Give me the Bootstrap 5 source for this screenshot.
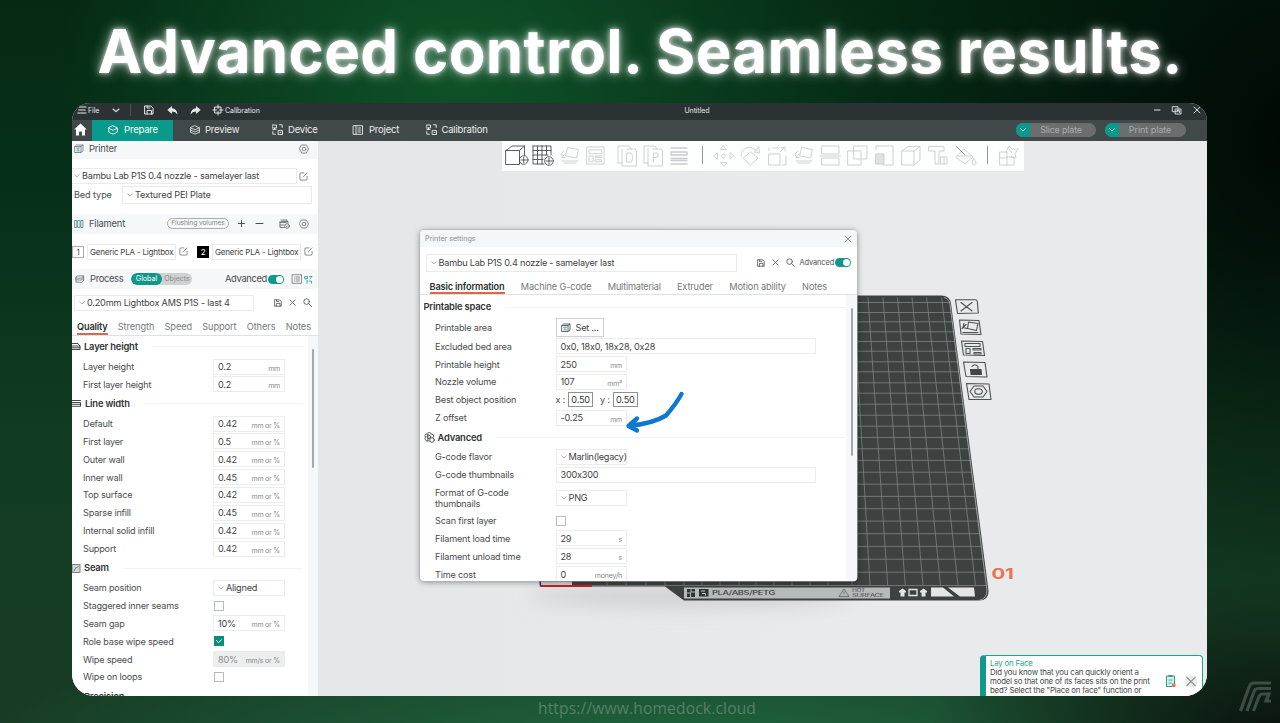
<!DOCTYPE html>
<html lang="en">
<head>
<meta charset="utf-8">
<title>Advanced control. Seamless results.</title>
<meta name="viewport" content="width=device-width, initial-scale=1">
<link rel="stylesheet" href="https://cdn.jsdelivr.net/npm/bootstrap@5.3.0/dist/css/bootstrap.min.css">
<style>
  html,body{height:723px;overflow:hidden}
  body{font-family:Inter,"Liberation Sans",sans-serif;font-size:9.15px;line-height:1;letter-spacing:-.2px;color:#4a4d4f;width:1280px;
    background:
      radial-gradient(360px 150px at 1290px 730px,#0a130d 0%,rgba(10,19,13,0) 100%),
      radial-gradient(700px 130px at 680px 745px,#20663f 0%,rgba(32,102,63,0) 100%),
      radial-gradient(400px 330px at 460px 70px,#0f5229 0%,rgba(15,82,41,0) 100%),
      radial-gradient(460px 500px at 1300px 140px,#010804 0%,rgba(1,8,4,0) 100%),
      linear-gradient(180deg,#052a13 0%,#06301a 28%,#113c21 60%,#173c25 100%)}
  svg{display:block;flex:none;overflow:visible}
  .ln{fill:none;stroke:currentColor;stroke-linecap:round;stroke-linejoin:round}
  .headline{height:103px;font-size:60px;font-weight:700;color:#fff;letter-spacing:.35px;padding-top:15px;white-space:nowrap;
    text-shadow:0 0 5px rgba(255,255,255,.8),0 0 14px rgba(255,255,255,.6)}
  .app{width:1135px;height:593px;margin-left:72px;border-radius:18px 18px 22px 22px;overflow:hidden;background:#e7e8ea}
  .titlebar{height:17px;background:#2b3234;color:#e6e8e8;font-size:7px;letter-spacing:-.08px;padding-bottom:3px}
  .tabbar{height:20.5px;background:#414849;color:#eceeee;font-size:9.5px;padding-bottom:1px!important}
  .tab-on{width:81px;background:#089a8b;color:#fff;box-shadow:0 1px #089a8b}
  .tb-item{height:100%}
  .pill{height:14px;border-radius:7px;overflow:hidden;background:#6a6e6f;color:#a9adad;font-size:9px}
  .pill i{width:14px;height:14px;background:#0a9a8b;color:#fff}
  .side{width:246px;background:#fff;height:555.5px;overflow:hidden}
  .sec{height:20px;background:linear-gradient(#f6f8fa,#f4f6f8);font-size:9.4px}
  .sec svg{color:#6d7173}
  .box{border:1px solid #e9eaeb;background:#fff;white-space:nowrap;color:#3f4244}
  .chev{color:#a8acae}
  .ptabs{font-size:9.2px;letter-spacing:-.05px;color:#75797b;border-bottom:1px solid #dfe2e4}
  .ptabs b{color:#2b2f31;font-weight:600;letter-spacing:-.15px}
  .ptabs span,.ptabs b{white-space:nowrap;height:100%;border-bottom:2px solid transparent}
  .ptabs b{border-color:#d8694b}
  .d .ptabs{letter-spacing:-.13px}
  .ghead{height:21.3px;font-size:9.4px;font-weight:600;color:#2f3335;white-space:nowrap}
  .ghead::after{content:"";height:1px;flex:1;background:#f2f3f4;margin-left:15px}
  .r{height:17.87px;padding-left:11px;white-space:nowrap}
  .r>span:first-child{width:130px}
  .f{width:72px;height:16px;border:1px solid #ebeced;padding:0 4px 0 4px;color:#3f4244}
  .f small{font-size:7px;color:#85898b;padding-top:3px}
  .f.off{background:#eceded;color:#8b8e90}
  .ck{width:10px;height:10px;border:1px solid #b9bcbe;background:#fff}
  .ck.on{background:#0a8d80;border-color:#0a8d80;color:#fff}
  .sw{width:16px;height:9px;border-radius:5px;background:#10998b;padding:1px}
  .sw::after{content:"";width:7px;height:7px;border-radius:50%;background:#fff;display:block;margin-left:auto}
  .bar{width:2px;border-radius:1px;background:#a5a8aa}
  .stage{overflow:hidden;background:linear-gradient(90deg,#e4e6e8,#e9eaeb 60%)}
  .tools{width:522px;height:30px;margin-left:184px;background:#fdfefe;color:#c9cccd}
  .dlg{left:348px;top:127px;width:437px;height:351px;border-radius:4px;overflow:hidden;background:#fff;box-shadow:0 0 0 .6px #aeb1b3,0 1px 6px rgba(0,0,0,.4)}
  .dtitle{height:17px;background:#f4f6f8;font-size:7.2px;letter-spacing:-.05px;color:#8c9092}
  .d .r{padding-left:0;margin-left:11.5px}
  .d .r>span:first-child{width:120.5px}
  .d .f{width:71.5px}
  .xy{width:25px;height:15px;border:1px solid #8d9193;color:#333}
  .tip{left:908px;top:551.500px;width:223px;height:50px;border:1px solid #1f9f92;border-left:6px solid #0e9a8c;border-radius:4px;background:#fff;font-size:7.85px;line-height:9px;color:#45484a;padding:3.500px 0 0 4px;white-space:nowrap}
  .foot{font-family:"Open Sans",sans-serif;font-size:15.6px;color:#578068;letter-spacing:.15px;height:27px}
  .brand{right:8px;bottom:11px}
</style>
</head>
<body class="position-relative">
<svg width="0" height="0" class="position-absolute">
  <symbol id="cv" viewBox="0 0 6 4"><path class="ln" d="M.6.8 3 2.9 5.4.8" stroke-width=".9"/></symbol>
  <symbol id="ed" viewBox="0 0 10 10"><path class="ln" stroke-width=".7" d="M5.500 1H2.200Q1 1 1 2.200v5.600Q1 9 2.200 9h5.300Q9 9 9 7.800V5M4.700 5.600 8.800 1"/></symbol>
  <symbol id="nut" viewBox="0 0 10 10"><path class="ln" stroke-width=".8" d="M2.700 1h4.600L9.600 5 7.300 9H2.700L.4 5z"/><circle class="ln" stroke-width=".8" cx="5" cy="5" r="1.800"/></symbol>
  <symbol id="sv" viewBox="0 0 10 10"><path class="ln" d="M1 1h6l2 2v6H1zM3 9V5.500h4.500V9M3 1v2h3"/></symbol>
  <symbol id="x" viewBox="0 0 8 8"><path class="ln" stroke-width=".9" d="m1 1 6 6M7 1 1 7"/></symbol>
  <symbol id="mg" viewBox="0 0 10 10"><circle class="ln" stroke-width=".9" cx="4" cy="4" r="3.100"/><path class="ln" stroke-width=".9" d="m6.400 6.400 3.100 3.100"/></symbol>
  <symbol id="pr" viewBox="0 0 10 10"><path class="ln" stroke-width=".8" d="M1 2.500h6v6H1zM1 2.500 2.500 1H9L7 2.500M9 1v6L7 8.500"/><path d="M2.300 4.200h3.500M4 4.200v2M2.300 6.800h3.500" stroke="#2aa595" stroke-width=".9"/></symbol>
  <symbol id="dv" viewBox="0 0 11 11"><path class="ln" stroke-width=".9" d="M.5 1h4v3h-4zM2.500 4v1.500M1 5.500h3M7.500.8h2.700V3.500M.8 7.500v2.700h2.700M6.500 6.500h4v4h-4zM8 8.500h1"/></symbol>
  <symbol id="lay" viewBox="0 0 10 10"><path class="ln" stroke-width=".8" d="M5 .8 9.400 2.800 5 4.800.6 2.800zM.6 5 5 7 9.400 5M.6 7.200 5 9.200 9.400 7.200M.6 2.800v4.400M9.400 2.800v4.400"/></symbol>
  <symbol id="drop" viewBox="0 0 20 20"><path class="ln" stroke-width=".9" d="M8 2.500 18.500 4.500 16.500 13 6 11zM1 9l3-3M2 12.500 5 9M2 9.500v3h3M2 16h16M4 18h12"/></symbol>
  <symbol id="arr" viewBox="0 0 20 20"><path class="ln" stroke-width=".9" d="M1 1h18v18H1zM3.500 4h13v4h-13zM3.500 10.500h4v6h-4zM10 10.500h6.500V12H10zM10 14.500h6.500v2H10z"/></symbol>
</svg>

<h1 class="headline text-center m-0">Advanced control. Seamless results.</h1>

<main class="app position-relative">
  <header class="titlebar d-flex align-items-center position-relative">
    <svg width="10" height="8" viewBox="0 0 10 8" style="margin-left:5px"><path class="ln" stroke-width="1.100" d="M2.500 1h6.500M1.700 4h6.500M.8 7H9"/></svg>
    <span style="width:20px;margin-left:1px">File</span>
    <svg width="8" height="5" class="ms-1"><use href="#cv"/></svg>
    <span style="width:1px;height:12px;background:#50575a;margin-left:10px"></span>
    <svg width="10" height="10" style="margin-left:13px"><use href="#sv"/></svg>
    <svg width="11" height="9" viewBox="0 0 11 9" style="margin-left:13px"><path fill="currentColor" d="M5 0v2.200Q10 2.500 10.500 8.500 8.500 5.500 5 5.600V8L.3 4z"/></svg>
    <svg width="11" height="9" viewBox="0 0 11 9" style="margin-left:12px"><path fill="currentColor" d="M6 0v2.200Q1 2.500.5 8.500 2.500 5.500 6 5.600V8l4.700-4z"/></svg>
    <svg width="10" height="10" viewBox="0 0 10 10" style="margin-left:12px"><path class="ln" d="M2 2h6v6H2zM5 0v3.500M5 6.500V10M0 5h3.500M6.500 5H10"/></svg>
    <span style="margin-left:2px">Calibration</span>
    <span class="position-absolute translate-middle" style="left:625px;top:7px">Untitled</span>
    <span class="ms-auto d-flex align-items-center" style="margin-right:6px;gap:11px">
      <svg width="7" height="8" viewBox="0 0 7 8"><path class="ln" d="M.5 4H6"/></svg>
      <svg width="10" height="9" viewBox="0 0 10 9"><path class="ln" stroke-width=".9" d="M.7.7H6v5H.7zM3.500 3h5.500v5H3.500zM5 4.500h2.500v2"/></svg>
      <svg width="8" height="8"><use href="#x"/></svg>
    </span>
  </header>

  <nav class="tabbar d-flex align-items-center p-0">
    <svg width="20" height="13" viewBox="0 0 20 13"><path fill="#fff" d="M8.500.5 14.800 6.500H13V12.500H9.900V8.500H7.100v4H4V6.500H2.200z"/></svg>
    <div class="tab-on tb-item d-flex align-items-center justify-content-center" style="gap:6px;padding-left:1px"><svg width="10" height="10" viewBox="0 0 10 10"><path class="ln" stroke-width=".9" d="M5 .8 9.300 2.900v4.200L5 9.200.7 7.100V2.900zM.7 3.200 5 5.300 9.300 3.200"/></svg>Prepare</div>
    <div class="d-flex align-items-center" style="margin-left:17px;gap:5px;width:66px"><svg width="10" height="10"><use href="#lay"/></svg>Preview</div>
    <div class="d-flex align-items-center" style="margin-left:16px;gap:5px;width:66px"><svg width="11" height="11"><use href="#dv"/></svg>Device</div>
    <div class="d-flex align-items-center" style="margin-left:15px;gap:6px;width:66px"><svg width="10" height="10" viewBox="0 0 10 10"><path class="ln" stroke-width=".9" d="M.5.700h9v8.600h-9zM3 .7v8.600M5 3h2.500M5 5h2.500M5 7h2.500"/></svg>Project</div>
    <div class="d-flex align-items-center" style="margin-left:6.500px;gap:5px"><svg width="11" height="11"><use href="#dv"/></svg>Calibration</div>
    <div class="ms-auto d-flex" style="margin-right:21px;gap:9px">
      <div class="pill d-flex align-items-center" style="width:80px"><i class="d-flex align-items-center justify-content-center"><svg width="6" height="4"><use href="#cv"/></svg></i><span class="flex-fill text-center" style="padding-right:4px">Slice plate</span></div>
      <div class="pill d-flex align-items-center" style="width:81px"><i class="d-flex align-items-center justify-content-center"><svg width="6" height="4"><use href="#cv"/></svg></i><span class="flex-fill text-center" style="padding-right:5px;letter-spacing:-.05px">Print plate</span></div>
    </div>
  </nav>

  <div class="d-flex">
    <aside class="side flex-shrink-0">
      <div class="sec d-flex align-items-center" style="height:18px;padding:0 9px 1px 2px"><svg width="10" height="10"><use href="#pr"/></svg><span style="margin-left:5px">Printer</span><svg width="10" height="10" class="ms-auto"><use href="#nut"/></svg></div>
      <div class="d-flex align-items-center" style="height:17px;margin-top:9px"><div class="box d-flex align-items-center" style="width:225px;height:16px;padding-left:2px;border-left:0"><svg width="6" height="4" class="chev"><use href="#cv"/></svg><span style="margin-left:2px">Bambu Lab P1S 0.4 nozzle - samelayer last</span></div><svg width="9" height="9" style="margin-left:2px"><use href="#ed"/></svg></div>
      <div class="d-flex align-items-center" style="height:18px;margin-top:1.500px"><span style="width:50px;padding-left:2px;white-space:nowrap;letter-spacing:-.1px">Bed type</span><div class="box d-flex align-items-center" style="width:190px;height:18px;padding-left:4px"><svg width="6" height="4" class="chev"><use href="#cv"/></svg><span style="margin-left:2px;letter-spacing:-.15px">Textured PEI Plate</span></div></div>
      <div class="sec d-flex align-items-center" style="margin-top:9.500px;padding:0 9px 0 2px"><svg width="10" height="10" viewBox="0 0 10 10"><path class="ln" stroke-width=".8" d="M1 1.500h1.800v7H1zM7.200 1.500H9v7H7.200z"/><path class="ln" stroke-width=".8" style="stroke:#2aa595" d="M4 1.500h2v7H4z"/></svg><span style="margin-left:5px;width:78px">Filament</span>
        <span class="d-flex align-items-center justify-content-center rounded-pill" style="border:1px solid #a9acae;width:62px;height:11px;font-size:6.700px;letter-spacing:-.1px;color:#85898b">Flushing volumes</span>
        <svg width="7" height="7" viewBox="0 0 7 7" style="margin-left:9px;color:#4b4f51"><path class="ln" d="M.5 3.500h6M3.500.5v6"/></svg>
        <svg width="7" height="7" viewBox="0 0 7 7" style="margin-left:11px;color:#4b4f51"><path class="ln" d="M0 3.500h7"/></svg>
        <svg width="11" height="10" viewBox="0 0 11 10" class="ms-auto"><path class="ln" stroke-width=".9" d="M1 3.500h6M1 6h4M1 2.500v6h4.500M2 1h6v2M2.500 2.500H9V4"/><circle class="ln" stroke-width=".9" cx="8" cy="7" r="2.300"/><path class="ln" stroke-width=".7" d="m7 7 .8.800L9 6.500"/></svg>
        <svg width="10" height="10" style="margin-left:9px"><use href="#nut"/></svg></div>
      <div class="d-flex align-items-center" style="height:17px;margin-top:9.500px;font-size:8px">
        <span class="d-flex align-items-center justify-content-center" style="width:12px;height:12px;border:1px solid #aaadaf">1</span><div class="box d-flex align-items-center" style="width:89px;height:16px;padding-left:2px;margin-left:3px">Generic PLA - Lightbox</div><svg width="9" height="9" style="margin-left:3px"><use href="#ed"/></svg>
        <span class="d-flex align-items-center justify-content-center text-white" style="width:12px;height:12px;margin-left:9px;background:#000">2</span><div class="box d-flex align-items-center" style="width:89px;height:16px;padding-left:2px;margin-left:3px">Generic PLA - Lightbox</div><svg width="9" height="9" style="margin-left:3px"><use href="#ed"/></svg></div>
      <div class="sec d-flex align-items-center" style="margin-top:9px;padding:0 5px 0 3px"><svg width="9" height="9" viewBox="0 0 10 10"><path class="ln" stroke-width=".9" d="M3 1h6.500L7.500 3.500H1zM1 3.500v2h6.500l2-2.500M1 5.500V8h6.500l2-2.500M9.500 1v5"/></svg><span style="margin-left:6px;width:41px;letter-spacing:-.35px">Process</span>
        <div class="d-flex align-items-center rounded-pill overflow-hidden" style="width:61px;height:12px;background:#cfd1d2;font-size:7.200px;letter-spacing:-.05px;color:#8b8e90"><span class="rounded-pill d-flex align-items-center justify-content-center h-100 text-white" style="width:31px;background:#0f978a">Global</span><span class="flex-fill text-center">Objects</span></div>
        <span class="ms-auto" style="letter-spacing:-.35px">Advanced</span><span class="sw" style="margin-left:1px"></span>
        <svg width="10" height="10" viewBox="0 0 10 10" style="margin-left:8px"><path class="ln" stroke-width=".8" d="M.5.700h9v8.600h-9zM2.500 3h.2M4 3h3.500M2.500 5h.2M4 5h3.500M2.500 7h.2M4 7h3.500"/></svg>
        <svg width="9" height="9" viewBox="0 0 9 9" style="margin-left:2px;color:#35a89a"><path class="ln" stroke-width=".9" d="M1 1.500h2.500V3.500H1zM5.500 1.500H8L6 4M2 4.500 4 6.500M5.500 6h2v2.200M3 6.500v1.800"/></svg></div>
      <div class="d-flex align-items-center" style="height:17px;margin-top:5px;margin-left:2px"><div class="box d-flex align-items-center" style="width:180px;height:16px;padding-left:4px"><svg width="6" height="4" class="chev"><use href="#cv"/></svg><span style="margin-left:2px">0.20mm Lightbox AMS P1S - last 4</span></div><svg width="8" height="8" style="margin-left:20px"><use href="#sv"/></svg><svg width="7" height="7" style="margin-left:7px"><use href="#x"/></svg><svg width="9" height="9" style="margin-left:7px"><use href="#mg"/></svg></div>
      <div class="ptabs d-flex justify-content-between" style="height:18px;margin-top:6.500px;padding:4.500px 7px 0 5px"><b>Quality</b><span>Strength</span><span>Speed</span><span>Support</span><span>Others</span><span>Notes</span></div>
      <div class="d-flex" style="height:360px">
        <div style="width:231px;margin-top:.8px">
          <div class="ghead d-flex align-items-center"><svg width="9" height="9" viewBox="0 0 9 9" style="margin-right:3px"><path class="ln" stroke-width=".9" d="M0 4h8v3.500H0M0 5.800h8M0 1.500h6L8 4"/></svg>Layer height</div>
          <div class="r d-flex align-items-center"><span>Layer height</span><div class="f d-flex align-items-center justify-content-between">0.2<small>mm</small></div></div>
          <div class="r d-flex align-items-center"><span>First layer height</span><div class="f d-flex align-items-center justify-content-between">0.2<small>mm</small></div></div>
          <div class="ghead d-flex align-items-center"><svg width="9" height="9" viewBox="0 0 9 9" style="margin-right:4px"><path class="ln" stroke-width=".9" d="M0 1.500h8.500M0 3.500h8.500v3.800H0M0 5.300h8.500"/></svg>Line width</div>
          <div class="r d-flex align-items-center"><span>Default</span><div class="f d-flex align-items-center justify-content-between">0.42<small>mm or %</small></div></div>
          <div class="r d-flex align-items-center"><span>First layer</span><div class="f d-flex align-items-center justify-content-between">0.5<small>mm or %</small></div></div>
          <div class="r d-flex align-items-center"><span>Outer wall</span><div class="f d-flex align-items-center justify-content-between">0.42<small>mm or %</small></div></div>
          <div class="r d-flex align-items-center"><span>Inner wall</span><div class="f d-flex align-items-center justify-content-between">0.45<small>mm or %</small></div></div>
          <div class="r d-flex align-items-center"><span>Top surface</span><div class="f d-flex align-items-center justify-content-between">0.42<small>mm or %</small></div></div>
          <div class="r d-flex align-items-center"><span>Sparse infill</span><div class="f d-flex align-items-center justify-content-between">0.45<small>mm or %</small></div></div>
          <div class="r d-flex align-items-center"><span>Internal solid infill</span><div class="f d-flex align-items-center justify-content-between">0.42<small>mm or %</small></div></div>
          <div class="r d-flex align-items-center"><span>Support</span><div class="f d-flex align-items-center justify-content-between">0.42<small>mm or %</small></div></div>
          <div class="ghead d-flex align-items-center"><svg width="9" height="9" viewBox="0 0 9 9" style="margin-right:3px;color:#7b7f81"><path class="ln" style="fill:#d3d6d7" d="M.5.500h7.500v8H.5z"/><path class="ln" d="M2 7Q2.500 3 6.500 2.500"/></svg>Seam</div>
          <div class="r d-flex align-items-center"><span>Seam position</span><div class="f d-flex align-items-center"><svg width="6" height="4" class="chev" style="margin-right:2px"><use href="#cv"/></svg>Aligned</div></div>
          <div class="r d-flex align-items-center"><span>Staggered inner seams</span><i class="ck" style="margin-left:1px"></i></div>
          <div class="r d-flex align-items-center"><span>Seam gap</span><div class="f d-flex align-items-center justify-content-between">10%<small>mm or %</small></div></div>
          <div class="r d-flex align-items-center"><span>Role base wipe speed</span><i class="ck on" style="margin-left:1px"><svg width="8" height="8" viewBox="0 0 8 8"><path class="ln" d="m1.500 3.500 2 2.200 3-3"/></svg></i></div>
          <div class="r d-flex align-items-center"><span>Wipe speed</span><div class="f off d-flex align-items-center justify-content-between">80%<small>mm/s or %</small></div></div>
          <div class="r d-flex align-items-center"><span>Wipe on loops</span><i class="ck" style="margin-left:1px"></i></div>
          <div class="ghead d-flex align-items-center" style="padding-left:12px">Precision</div>
        </div>
        <div class="flex-fill d-flex" style="background:#f6f7f8;padding-left:4px;padding-top:13px;margin-left:5px"><div class="bar" style="height:119px"></div></div>
      </div>
    </aside>

    <section class="stage flex-fill position-relative">
      <svg class="position-absolute top-0 start-0" width="889" height="555" viewBox="318 140.500 889 555">
        <defs><filter id="bl" x="-20%" y="-200%" width="140%" height="500%"><feGaussianBlur stdDeviation="9"/></filter></defs>
        <ellipse cx="690" cy="596" rx="160" ry="11" fill="#cfd1d3" filter="url(#bl)"/>
        <path fill="#3d4241" d="M500 295H941Q950 295 951 303L988.500 590Q989 600 979 600H684L665 586H540Z"/>
        <path fill="none" stroke="#7d8180" stroke-width=".8" d="M838 297 852 585M853.500 297 870 585M868 297 887.700 585M883 297 905.300 585M897.500 297 923 585M912 297 940.500 585M926.700 297 958 585M941.700 297 975.500 585M800 302H950M800 312H951M800 321.300H952.500M800 331.300H954M800 341H955M800 350.700H956.500M800 361.300H958M800 371.300H959M800 382.300H960.500M800 392.700H962M800 403.700H963.500M800 414.700H965M800 425.700H966M800 436.900H967.500M800 448.300H969M800 459.900H970.500M800 471.700H972M800 483.700H973.500M800 495.900H975M800 508.200H977M800 520.600H978.500M800 533.200H980M800 545.900H982M800 558.700H983.500M800 571.700H985.500M572 585H987M607 581v4M626 581v4M646 581v4M665 581v4M684 581v4M702 581v4M720 581v4M739 581v4M756 581v4M774 581v4M792 581v4M810 581v4M828 581v4"/>
        <path fill="none" stroke="#b5b8b8" stroke-width=".8" d="M944 297Q949 298 950 304L987 590Q987 598 979 600"/>
        <path fill="#d5d6d8" d="M541 581h31v3.500h-31z"/><path stroke="#c3202c" stroke-width="2" d="M541 585.500H592"/><path stroke="#2b2c86" stroke-width="1.200" d="M540.500 581v5"/>
        <path fill="#b7babb" d="M684 587H890V598H684z"/>
        <path fill="#2f3433" d="M687 588.500h3.500v3.500H687zM691.500 588.500h3.500v2.500h-3.500zM687 593h3v3.500h-3zM691 592h4v4.500h-4zM699 588.500h9.500v7.500H699z"/>
        <path fill="none" stroke="#c6c9ca" d="M701 590.500h4M702 593h3.500v2"/>
        <text x="712" y="594.300" font-size="6.200" font-weight="500" textLength="63" lengthAdjust="spacingAndGlyphs" fill="#3b403f">PLA/ABS/PETG</text>
        <path fill="none" stroke="#5a5e5e" stroke-width=".8" d="m844 588.500 5 7.500h-10zM844 591v3"/>
        <text x="852" y="591.800" font-size="4.200" textLength="13" lengthAdjust="spacingAndGlyphs" fill="#4b5050">HOT</text>
        <text x="852" y="596.200" font-size="4.200" textLength="32" lengthAdjust="spacingAndGlyphs" fill="#4b5050">SURFACE</text>
        <g fill="#e3e5e6"><path d="M899 590.500 902.500 588 906 590.500V592H904.500V596H900.500V592H899zM920 590.500 923.500 588 927 590.500V592H925.500V596H921.500V592H920z"/><path d="M931 587H943L954 596H931zM948 587H974L975 596H960z"/></g>
        <path fill="none" stroke="#e3e5e6" stroke-width="1.300" d="M909 589h8v6h-8z"/>
        <text x="991.500" y="578" font-size="14.500" font-weight="700" textLength="22" lengthAdjust="spacingAndGlyphs" fill="#f0704d">01</text>
        <g color="#4c5152">
          <g class="ln" stroke-width="1.100"><path d="M955.500 299.300 975.500 299.300Q977 299.300 977.300 301L978.300 312.500 957.500 313zM959.500 319.500 979 320 981 334 961 333.500zM961.500 340.500 982.500 341 984.500 355 963.500 354.500zM963.500 361.500 985 362 987 376.500 966 376zM966.500 383 989 383.500 991 399 969 399z"/><path d="m961 302 11 8.500M972 302 961 310.500M968.500 321.500 978 323 976.500 330 967.500 328zM963 332h15M962 328l4-4M964 323l-1 4 4 1M965 343h15v3h-15zM966 348h4v5h-4zM973 348h8v1.500h-8zM974 352h7v1.500h-7zM972 366Q975 362.500 978 366V369M974 385.500h9L987 391l-4 5.500h-9L970 391z"/><ellipse cx="978.500" cy="391" rx="3.800" ry="2.800"/></g>
          <path fill="#414647" d="M970 368.500H981.500L982 374.500H970.500z"/>
        </g>
      </svg>
      <div class="tools position-relative d-flex align-items-center" style="padding:0 5px 0 4px">
        <svg width="513" height="26" viewBox="506 143 513 26">
          <g class="ln" stroke-width=".9">
            <g style="stroke:#4b4f51"><path d="M506 150.500h13.500v14H506zM506 150.500 512 146h12.500L519.500 150.500M524.500 146v9.500"/><circle cx="523.700" cy="160" r="4.300"/><path d="M521 160h5.500M523.700 157.300v5.500M533 146h18v9M533 146v18h11M537.500 146v18M542 146v18M546.500 146v9M533 150.500h18M533 155h15M533 159.500h10"/><circle cx="549" cy="161" r="4.300"/><path d="M546.300 161h5.500M549 158.300v5.500"/></g>
            <use href="#drop" x="560" y="145" width="20" height="20"/><use href="#arr" x="586" y="146" width="19" height="19"/>
            <path d="M627 149h8l1.500 2V166H622V149M618 163V146h11l2 3M618 163h4M653 149h8l1.500 2V166H648V149M644 163V146h11l2 3M644 163h4"/>
            <path d="M627 153h3.500q2 0 2 4.500t-2 4.500H627zM653.500 162v-9h4q1.500 2.200 0 4.500h-4"/>
            <path stroke-width="1.300" d="M671 148h16M671 152h16v3h-16zM671 158.500h16M671 160.500h16M671 164h16"/>
            <path style="stroke:#85898b" d="M702.500 146.500v17M987.500 146.500v17"/>
            <path d="m723.500 146 3 3.500h-6zM723.500 166l-3-3.500h6zM714 156l3.500-3v6zM733.500 156l-3.500 3v-6zM721.500 156l2-2 2 2-2 2z"/>
            <path d="m751 152 7 6-7.500 7-7-6.500zM741 156Q742 147 751 147.500L757 151M759 147l.5 6-5-1z"/>
            <path d="M769 154h11v11h-11zM769 150.500V148M773 148h5M786 156v9h-4M780 152l5-5M781.500 147.500h3.500v3.500"/>
            <use href="#drop" x="794" y="145" width="20" height="20"/>
            <path d="M822 146h17v8h-17zM822 158h17v7h-17zM820 156h21"/>
            <path d="M848 151h13v14h-13zM854 146h13v13h-13z"/><path d="M876 150v-4h17v19h-10"/><path style="fill:#dfe1e2" d="M876 154h8v10h-8z"/>
            <path d="M902 151h12v14h-12zM902 151 908 146.500h12L914 151M920 146.500V160L914 165"/>
            <path d="M929 146.500h15v4.500h-5v13h-4v-13h-6zM941 157h6v7h-6zM944 157v7"/>
            <path d="m964 149 9 8-8 7-9-6.500zM957 156h15M974 159q-4 5 0 6 4-1 0-6z"/><path style="stroke:#8d9193" d="m956 146 9 9"/>
            <path d="M1000 152h7v5h7v8h-14zM1007 157v8M1000 158h7M1006 152l3-6 3 3h6l-3 5 1 4-5-1M1009 149l3 4"/>
          </g>
        </svg>
      </div>
    </section>
  </div>

  <div class="dlg d position-absolute">
    <div class="dtitle d-flex align-items-center" style="padding:0 5px"><span>Printer settings</span><svg width="8" height="8" class="ms-auto"><use href="#x"/></svg></div>
    <div class="d-flex align-items-center" style="height:18px;margin:6.500px 6px 0 6px"><div class="box d-flex align-items-center h-100" style="width:311px;padding-left:4px"><svg width="6" height="4" class="chev"><use href="#cv"/></svg><span style="margin-left:1.500px;letter-spacing:-.23px">Bambu Lab P1S 0.4 nozzle - samelayer last</span></div><svg width="8" height="8" style="margin-left:20px"><use href="#sv"/></svg><svg width="7" height="7" style="margin-left:7px"><use href="#x"/></svg><svg width="9" height="9" style="margin-left:7px"><use href="#mg"/></svg><span style="font-size:7.400px;letter-spacing:-.1px;margin-left:4.500px">Advanced</span><span class="sw ms-auto"></span></div>
    <div class="ptabs d-flex" style="height:18px;margin-top:5.500px;padding:4.500px 0 0 9.500px;gap:16.300px"><b>Basic information</b><span>Machine G-code</span><span style="letter-spacing:-.25px">Multimaterial</span><span>Extruder</span><span>Motion ability</span><span>Notes</span></div>
    <div class="d-flex" style="height:286px">
      <div class="overflow-hidden" style="width:422px;margin-left:3.500px;padding-top:1.500px">
        <div class="ghead d-flex align-items-center">Printable space</div>
        <div class="r d-flex align-items-center" style="height:19.500px"><span>Printable area</span><div class="box d-flex align-items-center" style="width:48px;height:19px;padding-left:4px;gap:5px;border-color:#cfd2d3"><svg width="10" height="10"><use href="#pr"/></svg>Set ...</div></div>
        <div class="r d-flex align-items-center"><span>Excluded bed area</span><div class="f d-flex align-items-center" style="width:260px">0x0, 18x0, 18x28, 0x28</div></div>
        <div class="r d-flex align-items-center"><span>Printable height</span><div class="f d-flex align-items-center justify-content-between">250<small>mm</small></div></div>
        <div class="r d-flex align-items-center"><span>Nozzle volume</span><div class="f d-flex align-items-center justify-content-between">107<small>mm³</small></div></div>
        <div class="r d-flex align-items-center"><span>Best object position</span>x :<span class="xy d-flex align-items-center justify-content-center" style="margin-left:3px">0.50</span><span style="margin-left:7px">y :</span><span class="xy d-flex align-items-center justify-content-center" style="margin-left:3px">0.50</span></div>
        <div class="r d-flex align-items-center"><span>Z offset</span><div class="f d-flex align-items-center justify-content-between">-0.25<small>mm</small></div></div>
        <div class="ghead d-flex align-items-center"><svg width="11" height="11" viewBox="0 0 11 11" style="margin-right:3px"><path class="ln" stroke-width=".8" d="M4 .8h2.500l.8 1.500h1.700L10 4.500 9 5.500M3.500 9H2.500L.8 6.500l.7-1.500L.8 3.500 2 2h1.500zM5 9.500 4 8.500"/><circle class="ln" stroke-width=".8" cx="4.800" cy="4.800" r="1.800"/><circle class="ln" stroke-width=".8" cx="8" cy="8" r="2.300"/></svg>Advanced</div>
        <div class="r d-flex align-items-center"><span>G-code flavor</span><div class="f d-flex align-items-center"><svg width="6" height="4" class="chev" style="margin-right:2px"><use href="#cv"/></svg><span style="letter-spacing:-.25px">Marlin(legacy)</span></div></div>
        <div class="r d-flex align-items-center"><span>G-code thumbnails</span><div class="f d-flex align-items-center" style="width:260px">300x300</div></div>
        <div class="r d-flex align-items-center" style="height:28px;line-height:11px"><span>Format of G-code<br>thumbnails</span><div class="f d-flex align-items-center"><svg width="6" height="4" class="chev" style="margin-right:2px"><use href="#cv"/></svg>PNG</div></div>
        <div class="r d-flex align-items-center"><span>Scan first layer</span><i class="ck"></i></div>
        <div class="r d-flex align-items-center"><span>Filament load time</span><div class="f d-flex align-items-center justify-content-between">29<small>s</small></div></div>
        <div class="r d-flex align-items-center"><span>Filament unload time</span><div class="f d-flex align-items-center justify-content-between">28<small>s</small></div></div>
        <div class="r d-flex align-items-center"><span>Time cost</span><div class="f d-flex align-items-center justify-content-between">0<small>money/h</small></div></div>
      </div>
      <div class="flex-fill" style="background:#f6f7f8;padding:13px 0 0 5.500px"><div class="bar" style="height:148px"></div></div>
    </div>
  </div>

  <svg class="position-absolute" width="62" height="46" viewBox="622 390 62 46" style="left:550px;top:287px"><path fill="none" stroke="#0f78d0" stroke-width="4.400" stroke-linecap="round" stroke-linejoin="round" d="M681.500 394Q676 404 666 415.500 652 424 630 425.500M637 418.500 628.500 426 637 430.500"/></svg>

  <div class="tip position-absolute"><div style="color:#1ea193">Lay on Face</div>Did you know that you can quickly orient a<br>model so that one of its faces sits on the print<br>bed? Select the "Place on face" function or
    <svg class="position-absolute" width="40" height="18" viewBox="1163 672 40 18" style="left:177px;top:16px"><path d="M1166.500 676h8v10.500h-8z" fill="#d4eeea" stroke="#2a9f92"/><path d="M1168.500 675h4v2h-4z" fill="#2a9f92"/><path d="M1168.500 680h4M1168.500 683h3" stroke="#2a9f92" stroke-width=".8"/><path d="M1172 683.500h3.500v3.500H1172z" fill="#e8774f"/><circle cx="1191" cy="681.500" r="6.500" fill="#ececed"/><path stroke="#8d9092" stroke-width="1.100" d="m1186.500 677 9 9M1195.500 677l-9 9"/></svg>
  </div>
</main>

<footer class="foot d-flex align-items-center justify-content-center" style="padding-left:14px;padding-bottom:1px">https://www.homedock.cloud</footer>
<svg class="brand position-absolute" width="33" height="31" viewBox="0 0 33 31"><path fill="none" stroke="#3d4c44" stroke-width="3.200" d="M1.500 30 10.500 5Q11.500 2 15 2H32M8 30 15 10.500Q16 7.500 19 7.500H32M14.500 30 20 15.500Q21 13 24 13H30L27 20H32"/></svg>
<script src="https://cdn.jsdelivr.net/npm/bootstrap@5.3.0/dist/js/bootstrap.bundle.min.js"></script>
</body>
</html>
